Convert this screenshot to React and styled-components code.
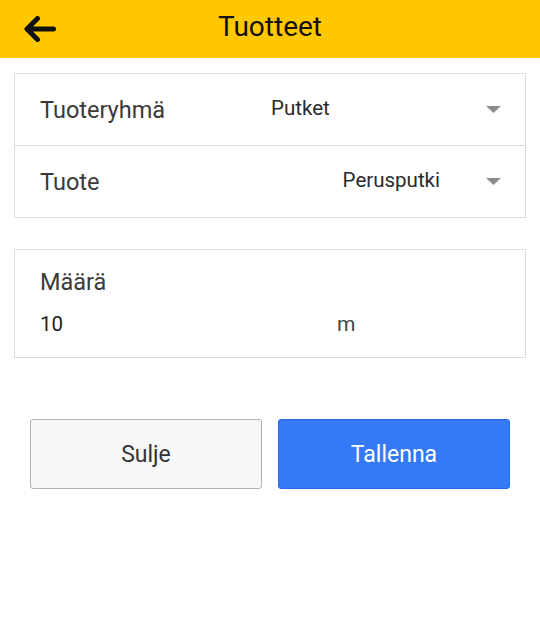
import styled, { createGlobalStyle } from "styled-components";

const GlobalStyle = createGlobalStyle`
    body {
        margin: 0;
        background: #ffffff;
        font-family: Roboto, "Noto Sans", sans-serif;
    }
`

const Page = styled.div`
    display: flex;
    flex-direction: column;
    width: 540px;
    min-height: 620px;
`
const Header = styled.header`
    display: grid;
    grid-template-columns: 80px 1fr 80px;
    align-items: center;
    height: 58px;
    background: #ffc800;
    box-sizing: border-box;
    padding-bottom: 6px;
`
const BackButton = styled.button`
    display: flex;
    align-items: center;
    border: none;
    background: none;
    padding: 0 0 0 24px;
    margin-top: 6px;
    cursor: pointer;
`
const Title = styled.h1`
    margin: 0;
    text-align: center;
    font-size: 28px;
    font-weight: 400;
    color: #111;
`
const Card = styled.div`
    display: flex;
    flex-direction: column;
    margin: ${(p) => p.$top}px 14px 0;
    border: 1px solid #dcdcdc;
`
const SelectRow = styled.div`
    display: grid;
    grid-template-columns: 231px 169px 1fr;
    align-items: center;
    height: 71px;
    padding: 0 24px 0 25px;
    & + & { border-top: 1px solid #dcdcdc; }
`
const Label = styled.span`
    font-size: 23.5px;
    color: #3a3a3a;
`
const Value = styled.span`
    justify-self: ${(p) => (p.$align === "end" ? "end" : "start")};
    margin-bottom: 3px;
    font-size: 20.5px;
    color: #2a2a2a;
`
const Caret = styled.svg`
    justify-self: end;
    width: 15px;
    height: 7px;
`
const AmountBox = styled.div`
    display: flex;
    flex-direction: column;
    gap: 16px;
    padding: 18px 25px 21px;
`
const AmountLine = styled.div`
    display: grid;
    grid-template-columns: 297px 1fr;
    align-items: baseline;
    font-size: 20.5px;
    color: #222;
`
const Unit = styled.span`
    font-size: 21px;
    color: #444;
`
const ButtonRow = styled.div`
    display: grid;
    grid-template-columns: 1fr 1fr;
    gap: 16px;
    padding: 61px 30px 0;
`
const ActionButton = styled.button`
    height: 70px;
    border-radius: 3px;
    font-family: inherit;
    font-size: 23px;
    border: 1px solid ${(p) => (p.$primary ? "#2b68e3" : "#b3b3b3")};
    background: ${(p) => (p.$primary ? "#3579f6" : "#f7f7f7")};
    color: ${(p) => (p.$primary ? "#ffffff" : "#333")};
    cursor: pointer;
`

function DropCaret() {
    return (
        <Caret viewBox="0 0 15 7">
            <polygon points="0,0 15,0 7.5,7" fill="#8c8c8c" />
        </Caret>
    );
}

function App() {
    const selects = [
        { label: "Tuoteryhmä", value: "Putket", align: "start" },
        { label: "Tuote", value: "Perusputki", align: "end" },
    ];

    return (
        <Page>
            <GlobalStyle />
            <Header>
                <BackButton aria-label="Takaisin">
                    <svg width="32" height="26" viewBox="0 0 32 26" fill="none">
                        <path d="M29.5 13H3M13.5 2.5L3 13l10.5 10.5" stroke="#111" strokeWidth="5" strokeLinecap="round" strokeLinejoin="round" />
                    </svg>
                </BackButton>
                <Title>Tuotteet</Title>
            </Header>

            <Card $top={15}>
                {selects.map((s) => (
                    <SelectRow key={s.label}>
                        <Label>{s.label}</Label>
                        <Value $align={s.align}>{s.value}</Value>
                        <DropCaret />
                    </SelectRow>
                ))}
            </Card>

            <Card $top={31}>
                <AmountBox>
                    <Label>Määrä</Label>
                    <AmountLine>
                        <span>10</span>
                        <Unit>m</Unit>
                    </AmountLine>
                </AmountBox>
            </Card>

            <ButtonRow>
                <ActionButton>Sulje</ActionButton>
                <ActionButton $primary>Tallenna</ActionButton>
            </ButtonRow>
        </Page>
    );
}

export default App;
